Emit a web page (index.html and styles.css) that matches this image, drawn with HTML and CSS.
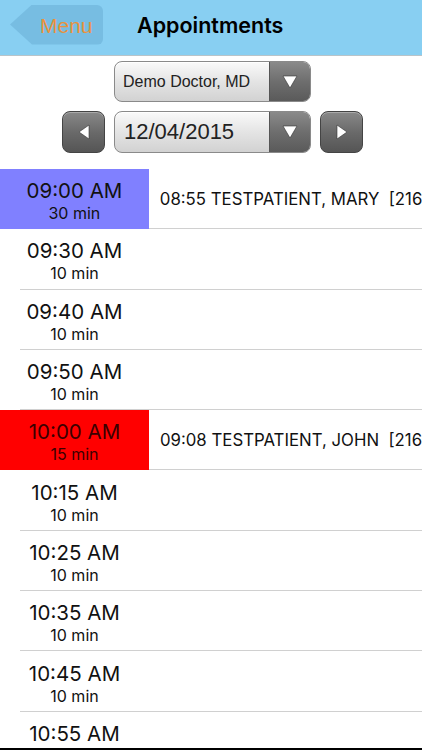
FILE: index.html
```html
<!DOCTYPE html>
<html lang="en">
<head>
    <meta charset="UTF-8">
    <meta name="viewport" content="width=device-width, initial-scale=1.0">
    <title>Appointments</title>
    <link rel="stylesheet" href="styles.css">
</head>
<body>
    <div class="app">
        <div class="header">
            <div class="menu-button">Menu</div>
            <h1>Appointments</h1>
        </div>

        <div class="controls">
            <div class="select doctor-select">
                <span class="select-text">Demo Doctor, MD</span>
                <span class="select-arrow">
                    <svg width="16" height="14" viewBox="0 0 16 14"><path d="M1 1 L15 1 L8 13 Z" fill="#fff" stroke="#333" stroke-width="0.6"/></svg>
                </span>
            </div>
            <div class="date-row">
                <div class="nav-button">
                    <svg width="12" height="16" viewBox="0 0 12 16"><path d="M11 1 L11 15 L1 8 Z" fill="#fff" stroke="#333" stroke-width="0.6"/></svg>
                </div>
                <div class="select date-select">
                    <span class="select-text">12/04/2015</span>
                    <span class="select-arrow">
                        <svg width="16" height="14" viewBox="0 0 16 14"><path d="M1 1 L15 1 L8 13 Z" fill="#fff" stroke="#333" stroke-width="0.6"/></svg>
                    </span>
                </div>
                <div class="nav-button">
                    <svg width="12" height="16" viewBox="0 0 12 16"><path d="M1 1 L1 15 L11 8 Z" fill="#fff" stroke="#333" stroke-width="0.6"/></svg>
                </div>
            </div>
        </div>

        <div class="slots" id="slots"></div>
    </div>

    <script>
        // Список слотов на день
        const slots = [
            { time: '09:00 AM', length: 30, patient: '08:55 TESTPATIENT, MARY  [216', color: 'blue' },
            { time: '09:30 AM', length: 10 },
            { time: '09:40 AM', length: 10 },
            { time: '09:50 AM', length: 10 },
            { time: '10:00 AM', length: 15, patient: '09:08 TESTPATIENT, JOHN  [216', color: 'red' },
            { time: '10:15 AM', length: 10 },
            { time: '10:25 AM', length: 10 },
            { time: '10:35 AM', length: 10 },
            { time: '10:45 AM', length: 10 },
            { time: '10:55 AM', length: 10 }
        ];

        const container = document.getElementById('slots');
        slots.forEach(slot => {
            const row = document.createElement('div');
            row.className = 'slot' + (slot.color ? ' slot-' + slot.color : '');
            row.innerHTML = `
                <div class="slot-time">
                    <div class="time">${slot.time}</div>
                    <div class="length">${slot.length} min</div>
                </div>
                <div class="slot-patient">${slot.patient || ''}</div>
            `;
            container.appendChild(row);
        });
    </script>
</body>
</html>
```

FILE: styles.css
```css
body {
    margin: 0;
    font-family: Inter, "Liberation Sans", sans-serif;
    background-color: #fff;
}

.app {
    width: 422px;
    height: 750px;
    display: flex;
    flex-direction: column;
    overflow: hidden;
}

.header {
    height: 55px;
    background-color: #88cff2;
    border-bottom: 1px solid #b9c4c9;
    display: flex;
    align-items: center;
    flex-shrink: 0;
}

.menu-button {
    width: 63px;
    height: 40px;
    margin-left: 10px;
    margin-top: -6px;
    padding-left: 30px;
    background-color: #77bde2;
    border-radius: 0 6px 6px 0;
    clip-path: polygon(22px 0, 100% 0, 100% 100%, 22px 100%, 0 50%);
    color: #e9923c;
    font-family: "Liberation Sans", sans-serif;
    font-size: 21px;
    line-height: 42px;
}

.header h1 {
    margin: -5px 0 0 34px;
    font-size: 21.5px;
    font-weight: 600;
    color: #000;
}

.controls {
    display: flex;
    flex-direction: column;
    align-items: center;
    padding: 5px 0 16px;
    gap: 9px;
    flex-shrink: 0;
}

.select {
    display: flex;
    height: 39px;
    border: 1px solid #8a8a8a;
    border-radius: 8px;
    overflow: hidden;
    background: linear-gradient(#fafafa, #e4e4e4 50%, #d2d2d2);
    box-shadow: inset 0 1px 0 #fff;
    font-family: "Liberation Sans", sans-serif;
}

.doctor-select {
    width: 195px;
    margin-left: 3px;
}

.date-select {
    width: 195px;
    height: 40px;
}

.select-text {
    flex: 1;
    display: flex;
    align-items: center;
    padding-left: 8px;
    color: #222;
    font-size: 16px;
}

.date-select .select-text {
    font-size: 22px;
    padding-left: 9px;
}

.select-arrow {
    width: 40px;
    display: flex;
    align-items: center;
    justify-content: center;
    border-left: 1px solid #555;
    background: linear-gradient(#8a8a8a, #6e6e6e 50%, #5a5a5a);
}

.date-row {
    display: flex;
    align-items: center;
    gap: 9px;
    margin-left: 3px;
}

.nav-button {
    width: 41px;
    height: 40px;
    border: 1px solid #444;
    border-radius: 8px;
    background: linear-gradient(#888, #6a6a6a 50%, #555);
    box-shadow: inset 0 1px 0 #aaa;
    display: flex;
    align-items: center;
    justify-content: center;
}

.slots {
    flex: 1;
    overflow: hidden;
    border-bottom: 2px solid #000;
}

.slot {
    display: flex;
    align-items: center;
    height: 60.3px;
    position: relative;
}

.slot::after {
    content: '';
    position: absolute;
    left: 20px;
    right: 0;
    bottom: 0;
    height: 1px;
    background-color: #d0d0d0;
}

.slot-time {
    width: 149px;
    height: 100%;
    padding-top: 3px;
    box-sizing: border-box;
    display: flex;
    flex-direction: column;
    align-items: center;
    justify-content: center;
    color: #111;
    position: relative;
    z-index: 1;
}

.slot-blue .slot-time {
    background-color: #8080ff;
}

.slot-red .slot-time {
    background-color: #ff0000;
    color: #3a0000;
}

.time {
    font-size: 20.5px;
    line-height: 25px;
}

.length {
    font-size: 16px;
    line-height: 20px;
}

.slot-patient {
    padding-left: 11px;
    font-size: 16.8px;
    color: #111;
    white-space: pre;
    overflow: hidden;
}
```
